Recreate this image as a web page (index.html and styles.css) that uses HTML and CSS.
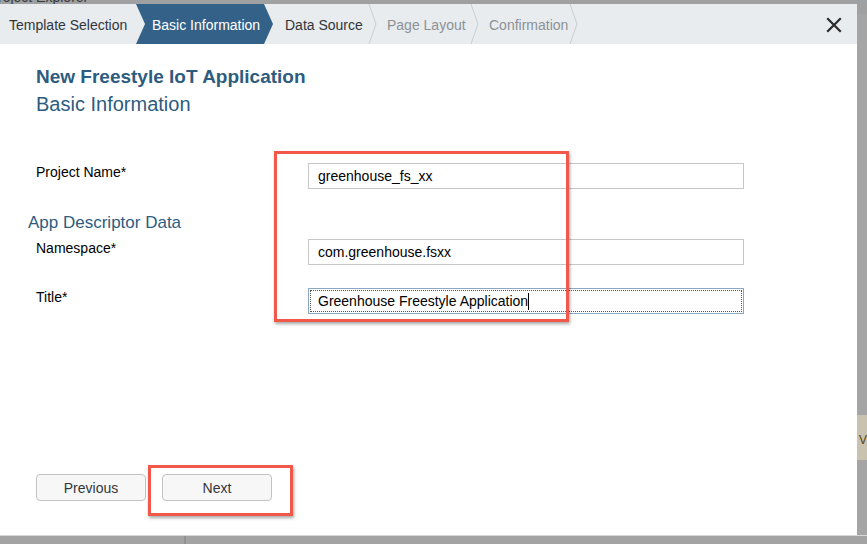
FILE: index.html
```html
<!DOCTYPE html>
<html>
<head>
<meta charset="utf-8">
<link rel="stylesheet" href="styles.css">
</head>
<body>
<div class="topstrip"><span>roject Explorer</span></div>
<div class="row">
  <div class="dialog">
    <div class="wizard">
      <div class="step done">Template Selection</div>
      <div class="step active">Basic Information</div>
      <div class="step next">Data Source</div>
      <svg class="chev" width="10" height="40" viewBox="0 0 10 40"><polyline points="1,0 8,20 1,40" fill="none" stroke="#c9cdd1" stroke-width="1"/></svg>
      <div class="step dim">Page Layout</div>
      <svg class="chev" width="10" height="40" viewBox="0 0 10 40"><polyline points="1,0 8,20 1,40" fill="none" stroke="#c9cdd1" stroke-width="1"/></svg>
      <div class="step dim">Confirmation</div>
      <svg class="chev" width="10" height="40" viewBox="0 0 10 40"><polyline points="1,0 8,20 1,40" fill="none" stroke="#c9cdd1" stroke-width="1"/></svg>
      <div class="spacer"></div>
      <svg class="close" width="16" height="16" viewBox="0 0 16 16"><path d="M2 2 L14 14 M14 2 L2 14" stroke="#2b2b2b" stroke-width="2.2" stroke-linecap="square"/></svg>
    </div>
    <div class="content">
      <h1 class="title">New Freestyle IoT Application</h1>
      <h2 class="subtitle">Basic Information</h2>
      <div class="form">
        <div class="field first">
          <label class="label">Project Name*</label>
          <div class="input">greenhouse_fs_xx</div>
        </div>
        <div class="section">App Descriptor Data</div>
        <div class="field ns">
          <label class="label">Namespace*</label>
          <div class="input">com.greenhouse.fsxx</div>
        </div>
        <div class="field tt">
          <label class="label">Title*</label>
          <div class="input focus">Greenhouse Freestyle Application<span class="caret"></span></div>
        </div>
      </div>
      <div class="spacer"></div>
      <div class="buttons">
        <button class="btn">Previous</button>
        <button class="btn">Next</button>
      </div>
      <div class="mark mark-form"></div>
      <div class="mark mark-next"></div>
    </div>
  </div>
  <div class="rightside"><div class="note">V</div></div>
</div>
<div class="bottomstrip"><div class="bs-left"></div><div class="bs-right"></div></div>
</body>
</html>
```
FILE: styles.css
```css
* { box-sizing: border-box; }
html, body { margin: 0; padding: 0; }
body {
  width: 867px;
  height: 544px;
  overflow: hidden;
  background: #a2a2a2;
  font-family: "Liberation Sans", Arial, sans-serif;
  color: #000;
}
.topstrip {
  height: 4px;
  overflow: hidden;
  background: #9ea0a2;
  position: relative;
}
.topstrip span {
  display: block;
  margin-top: -10px;
  margin-left: -2px;
  font-size: 14px;
  line-height: 14px;
  color: #3a3a3a;
}
.row { display: flex; height: 531px; }
.dialog {
  width: 858px;
  height: 531px;
  background: #fff;
  display: flex;
  flex-direction: column;
}
.rightside {
  flex: 1;
  background: #a5a5a5;
  border-top: 10px solid #a0a0a0;
  position: relative;
}
.rightside .note {
  margin-top: 401px;
  height: 45px;
  background: #c8c2ae;
  color: #5a4210;
  font-size: 12px;
  padding-top: 18px;
  overflow: hidden;
  padding-left: 2px;
}
.bottomstrip {
  height: 9px;
  display: flex;
  background: #a3a3a3;
  border-top: 1px solid #d8d8d8;
}
.bs-left { width: 186px; border-right: 2px solid #8f9194; }
.wizard {
  height: 40px;
  background: #e8ecef;
  display: flex;
  align-items: center;
  font-size: 14px;
}
.step {
  height: 40px;
  line-height: 42px;
  white-space: nowrap;
  color: #32363a;
}
.step.done { padding-left: 9px; width: 136px; }
.step.active {
  background: #346187;
  color: #fff;
  width: 137px;
  padding-left: 16px;
  clip-path: polygon(0 0, calc(100% - 9px) 0, 100% 50%, calc(100% - 9px) 100%, 0 100%, 9px 50%);
}
.step.next { padding-left: 12px; width: 95px; }
.step.dim { color: #8c9196; padding-left: 9px; }
.step.dim:nth-of-type(4) { width: 92px; }
.step.dim:nth-of-type(5) { width: 89px; }
.chev { flex: none; }
.spacer { flex: 1; }
.close { margin-right: 15px; margin-top: 2px; }
.content {
  flex: 1;
  display: flex;
  flex-direction: column;
  padding: 21px 0 34px 36px;
  position: relative;
}
.title {
  margin: 0;
  font-size: 19px;
  line-height: 24px;
  font-weight: 700;
  color: #2d5c7f;
}
.subtitle {
  margin: 3px 0 0 0;
  font-size: 20px;
  line-height: 24px;
  font-weight: 400;
  color: #2d5c7f;
}
.form { margin-top: 46px; }
.field {
  display: grid;
  grid-template-columns: 272px 436px;
  align-items: start;
}
.label {
  font-size: 14px;
  line-height: 18px;
}
.input {
  height: 26px;
  border: 1px solid #c6c6c6;
  font-size: 14px;
  line-height: 24px;
  padding-left: 9px;
  margin-top: 1px;
  white-space: nowrap;
}
.field .label { padding-top: 1px; }
.input.focus {
  border: 1px solid #8aa7c4;
  outline: 1px dotted #555;
  outline-offset: -3px;
}
.caret {
  display: inline-block;
  width: 1px;
  height: 17px;
  background: #000;
  vertical-align: -4px;
}
.section {
  margin: 23px 0 0 -8px;
  font-size: 17px;
  line-height: 22px;
  color: #2d5c7f;
}
.ns { margin-top: 4px; }
.tt { margin-top: 22px; }
.buttons { display: flex; gap: 16px; }
.btn {
  width: 110px;
  height: 27px;
  background: #f7f7f7;
  border: 1px solid #c2c2c2;
  border-radius: 4px;
  font-family: inherit;
  font-size: 14px;
  color: #32363a;
  padding: 0;
}
.mark {
  position: absolute;
  border: 3px solid #f2584a;
  box-shadow: 1px 2px 3px rgba(0,0,0,0.35);
}
.mark-form { left: 274px; top: 107px; width: 295px; height: 171px; }
.mark-next { left: 148px; top: 421px; width: 145px; height: 51px; }
```
